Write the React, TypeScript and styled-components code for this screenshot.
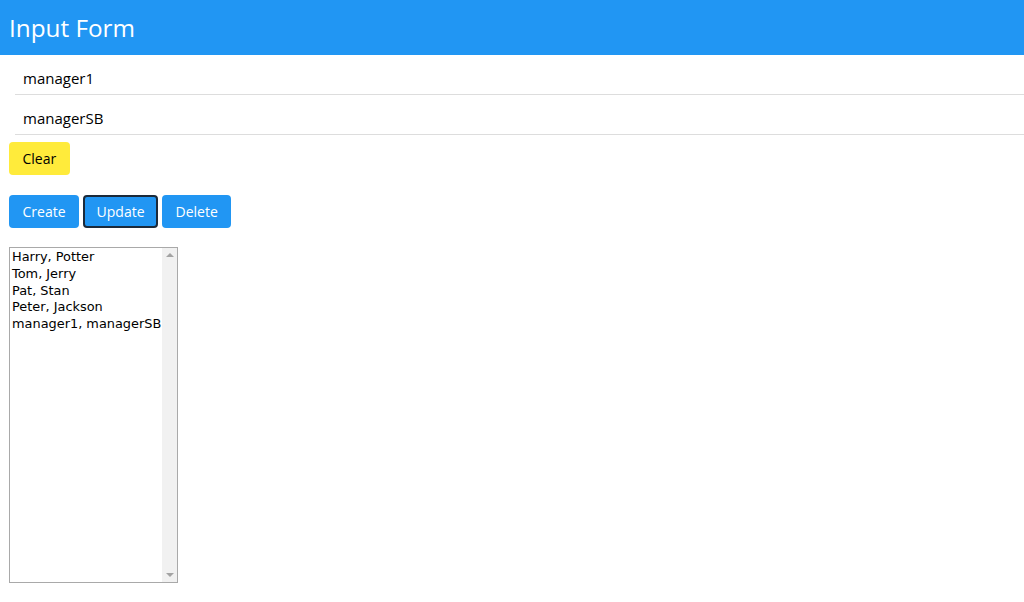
import React from "react";
import styled, {createGlobalStyle} from "styled-components";

const GlobalStyle = createGlobalStyle`
  html, body {
    margin: 0;
    padding: 0;
    background: #fff;
    font-family: "Open Sans", "Segoe UI", sans-serif;
    font-size: 15px;
    color: #000;
  }
`;

const Header = styled.div`
  background: #2196F3;
  color: #fff;
  height: 55px;
  display: flex;
  align-items: center;
  padding: 2px 9px 0;
  box-sizing: border-box;

  h1 {
    margin: 0;
    font-family: "Open Sans", "Segoe UI", sans-serif;
    font-weight: 400;
    font-size: 24.3px;
    line-height: 1;
  }
`;

const Fields = styled.div`
  padding-left: 15px;
  display: flex;
  flex-direction: column;
`;

const Field = styled.input`
  display: block;
  height: 40px;
  box-sizing: border-box;
  padding: 11px 8px 5px;
  border: none;
  border-bottom: 1px solid #ddd;
  font-family: "Open Sans", "Segoe UI", sans-serif;
  font-size: 15px;
  color: #000;
  outline: none;
  background: #fff;
`;

const Body = styled.div`
  padding: 7px 9px 0;
  display: flex;
  flex-direction: column;
  align-items: flex-start;
`;

const ButtonRow = styled.div<{$top: number}>`
  display: flex;
  gap: 4px;
  margin-top: ${p => p.$top}px;
`;

const Button = styled.button<{$color: "blue" | "yellow"; $focused?: boolean}>`
  height: 33px;
  box-sizing: border-box;
  padding: 0 ${p => (p.$focused ? 11.5 : 13.5)}px;
  border: ${p => (p.$focused ? "2px solid #1b2a3a" : "none")};
  border-radius: 4px;
  font-family: "Open Sans", "Segoe UI", sans-serif;
  font-size: 14px;
  cursor: pointer;
  background: ${p => (p.$color === "blue" ? "#2196F3" : "#ffeb3b")};
  color: ${p => (p.$color === "blue" ? "#fff" : "#000")};
`;

const ListBox = styled.div`
  margin-top: 19px;
  width: 169px;
  height: 336px;
  box-sizing: border-box;
  border: 1px solid #a9a9a9;
  display: flex;
  background: #fff;
`;

const Options = styled.div`
  flex: 1;
  padding: 1px 0 0 2px;
  font-family: "DejaVu Sans", Verdana, sans-serif;
  font-size: 12.9px;
  line-height: 16.75px;
  white-space: nowrap;
  overflow: hidden;
`;

const ScrollTrack = styled.div`
  width: 15px;
  background: #f1f1f1;
  display: flex;
  flex-direction: column;
  justify-content: space-between;
  align-items: center;
  padding: 5px 0;
  box-sizing: border-box;
`;

const Arrow = styled.div<{$down?: boolean}>`
  width: 0;
  height: 0;
  border-left: 4px solid transparent;
  border-right: 4px solid transparent;
  ${p => (p.$down ? "border-top: 4px solid #a3a3a3;" : "border-bottom: 4px solid #a3a3a3;")}
`;

const people = ["Harry, Potter", "Tom, Jerry", "Pat, Stan", "Peter, Jackson", "manager1, managerSB"];

export default function App() {
  return (
    <>
      <GlobalStyle/>
      <Header>
        <h1>Input Form</h1>
      </Header>
      <Fields>
        <Field defaultValue="manager1"/>
        <Field defaultValue="managerSB"/>
      </Fields>
      <Body>
        <ButtonRow $top={0}>
          <Button $color="yellow">Clear</Button>
        </ButtonRow>
        <ButtonRow $top={20}>
          <Button $color="blue">Create</Button>
          <Button $color="blue" $focused>Update</Button>
          <Button $color="blue">Delete</Button>
        </ButtonRow>
        <ListBox>
          <Options>
            {people.map(p => <div key={p}>{p}</div>)}
          </Options>
          <ScrollTrack>
            <Arrow/>
            <Arrow $down/>
          </ScrollTrack>
        </ListBox>
      </Body>
    </>
  );
}
